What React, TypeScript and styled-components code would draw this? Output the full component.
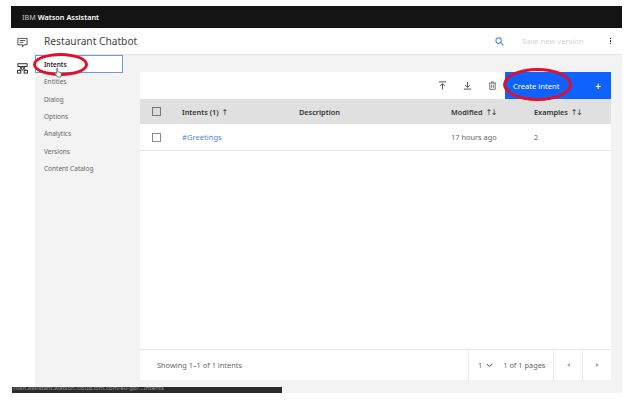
import React from 'react';
import styled, { createGlobalStyle } from 'styled-components';

const GlobalStyle = createGlobalStyle`
  html, body {
    margin: 0;
    padding: 0;
    background: #ffffff;
  }
  * {
    box-sizing: border-box;
  }
`;

const navItems = ['Intents', 'Entities', 'Dialog', 'Options', 'Analytics', 'Versions', 'Content Catalog'];

const App = () => {
  return (
    <Page>
      <GlobalStyle />
      <TopBar>
        <Brand>
          IBM <b>Watson Assistant</b>
        </Brand>
      </TopBar>
      <Body>
        <Rail>
          <svg width="11" height="11" viewBox="0 0 12 12" fill="none" stroke="#444" strokeWidth="1">
            <path d="M1 1.500h10v7H7.500L6 10.800 6 8.500H1z" />
            <path d="M3 3.800h6M3 5.800h4" />
          </svg>
          <svg width="11" height="11" viewBox="0 0 12 12" fill="none" stroke="#222" strokeWidth="1">
            <rect x="1" y="0.800" width="10" height="3" />
            <rect x="0.600" y="8" width="3.600" height="3" />
            <rect x="7.800" y="8" width="3.600" height="3" />
            <path d="M3 4l3 4 3-4M2.400 8l3.600-4 3.600 4" />
          </svg>
        </Rail>
        <Content>
          <Header>
            <Title>Restaurant Chatbot</Title>
            <HeaderActions>
              <svg width="9" height="9" viewBox="0 0 10 10" fill="none" stroke="#5a8fd0" strokeWidth="1.300">
                <circle cx="4" cy="4" r="3" />
                <path d="M6.200 6.200L9.400 9.400" />
              </svg>
              <SaveLabel>Save new version</SaveLabel>
              <Kebab>
                <i />
                <i />
                <i />
              </Kebab>
            </HeaderActions>
          </Header>
          <Workspace>
            <SideNav>
              {navItems.map((item, i) => (
                <NavItem key={item} $active={i === 0}>
                  {item}
                </NavItem>
              ))}
            </SideNav>
            <Card>
              <Toolbar>
                <ToolIcons>
                  <svg width="9" height="9" viewBox="0 0 10 10" fill="none" stroke="#444" strokeWidth="1">
                    <path d="M1 1h8M5 9.500V3M2.500 5.300L5 3l2.500 2.300" />
                  </svg>
                  <svg width="9" height="9" viewBox="0 0 10 10" fill="none" stroke="#444" strokeWidth="1">
                    <path d="M1 9h8M5 1v6M2.500 4.700L5 7l2.500-2.300" />
                  </svg>
                  <svg width="9" height="9" viewBox="0 0 10 10" fill="none" stroke="#666" strokeWidth="1">
                    <path d="M1 2.300h8M3.800 2.300V1h2.400v1.300M2 2.300v7h6v-7M4 4v3.500M6 4v3.500" />
                  </svg>
                </ToolIcons>
                <CreateButton>
                  <span>Create intent</span>
                  <Plus>+</Plus>
                </CreateButton>
              </Toolbar>
              <HeadRow>
                <CheckCell>
                  <Check $head />
                </CheckCell>
                <NameCell>Intents (1) <Arrow>↑</Arrow></NameCell>
                <DescCell>Description</DescCell>
                <ModifiedCell>Modified <Arrow>↑↓</Arrow></ModifiedCell>
                <ExamplesCell>Examples <Arrow>↑↓</Arrow></ExamplesCell>
              </HeadRow>
              <DataRow>
                <CheckCell>
                  <Check />
                </CheckCell>
                <NameCell>
                  <IntentLink>#Greetings</IntentLink>
                </NameCell>
                <DescCell />
                <ModifiedCell>17 hours ago</ModifiedCell>
                <ExamplesCell>2</ExamplesCell>
              </DataRow>
              <Spacer />
              <Footer>
                <FooterInfo>Showing 1–1 of 1 intents</FooterInfo>
                <PageSelect>
                  <span>1</span>
                  <svg width="7" height="5" viewBox="0 0 7 5" fill="none" stroke="#444" strokeWidth="1">
                    <path d="M0.800 1l2.700 2.600L6.200 1" />
                  </svg>
                  <PageText>1 of 1 pages</PageText>
                </PageSelect>
                <PagerButton>
                  <Triangle $left />
                </PagerButton>
                <PagerButton>
                  <Triangle />
                </PagerButton>
              </Footer>
            </Card>
          </Workspace>
        </Content>
      </Body>
      <StatusBar>
        <StatusText>cush.assistant.watson.cloud.ibm.com/eu-gb/...Intents</StatusText>
      </StatusBar>
      <Circle $x={33} $y={53} $w={55} $h={23} />
      <Circle $x={503} $y={68} $w={69} $h={33} />
      <Cursor viewBox="0 0 10 12" fill="#fff" stroke="#555" strokeWidth="0.800">
        <path d="M3 1.200c.7-.5 1.200 0 1.200.6v3.400l3 .8c.8.2 1.100.8.900 1.600L7.600 11H3.700L1.300 7.300c-.4-.8.5-1.300 1.200-.7l.5.5z" />
      </Cursor>
    </Page>
  );
};

export default App;

const Page = styled.div`
  position: relative;
  width: 640px;
  height: 410px;
  overflow: hidden;
  padding: 6px 18px 17px 11px;
  display: flex;
  flex-direction: column;
  background: #ffffff;
  font-family: 'Noto Sans', 'Open Sans', sans-serif;
`;
const TopBar = styled.div`
  height: 22px;
  background: #141414;
  display: flex;
  align-items: center;
  padding-left: 11px;
  flex-shrink: 0;
`;
const Brand = styled.div`
  color: #c8c8c8;
  font-size: 7.300px;
  b {
    color: #ffffff;
    font-weight: 600;
  }
`;
const Body = styled.div`
  flex: 1;
  display: flex;
  min-height: 0;
`;
const Rail = styled.div`
  width: 24px;
  display: flex;
  flex-direction: column;
  align-items: center;
  gap: 15px;
  padding: 9px 2px 0 0;
  flex-shrink: 0;
`;
const Content = styled.div`
  flex: 1;
  display: flex;
  flex-direction: column;
  min-width: 0;
`;
const Header = styled.div`
  height: 27px;
  display: flex;
  align-items: center;
  justify-content: space-between;
  padding-left: 9px;
  border-bottom: 1px solid #e4e4e4;
  flex-shrink: 0;
`;
const Title = styled.div`
  font-size: 10.200px;
  color: #444444;
`;
const HeaderActions = styled.div`
  display: flex;
  align-items: center;
  padding-right: 11px;
`;
const SaveLabel = styled.div`
  font-size: 7.600px;
  color: #d4d4d4;
  margin-left: 18px;
`;
const Kebab = styled.div`
  margin-left: 26px;
  display: flex;
  flex-direction: column;
  gap: 1px;
  i {
    display: block;
    width: 1.500px;
    height: 1.500px;
    background: #333333;
  }
`;
const Workspace = styled.div`
  flex: 1;
  display: flex;
  background: #f3f3f3;
  padding-bottom: 13px;
  min-height: 0;
`;
const SideNav = styled.div`
  width: 105px;
  display: flex;
  flex-direction: column;
  flex-shrink: 0;
`;
const NavItem = styled.div<{ $active?: boolean }>`
  width: 88px;
  height: ${(p) => (p.$active ? '18px' : '17.400px')};
  display: flex;
  align-items: center;
  padding-left: ${(p) => (p.$active ? '8px' : '9px')};
  font-size: ${(p) => (p.$active ? '6.400px' : '6.500px')};
  color: ${(p) => (p.$active ? '#222222' : '#666666')};
  font-weight: ${(p) => (p.$active ? 600 : 400)};
  background: ${(p) => (p.$active ? '#ffffff' : 'transparent')};
  border: ${(p) => (p.$active ? '1px solid #6c9bdc' : 'none')};
`;
const Card = styled.div`
  flex: 1;
  margin: 17px 11px 0 0;
  background: #ffffff;
  display: flex;
  flex-direction: column;
  min-width: 0;
`;
const Toolbar = styled.div`
  height: 27px;
  display: flex;
  justify-content: flex-end;
  align-items: stretch;
  flex-shrink: 0;
`;
const ToolIcons = styled.div`
  display: flex;
  align-items: center;
  gap: 16px;
  padding-right: 8px;
`;
const CreateButton = styled.div`
  width: 106px;
  background: #0f62fe;
  color: #ffffff;
  font-size: 7.600px;
  display: flex;
  align-items: center;
  justify-content: space-between;
  padding: 0 10px 0 8px;
`;
const Plus = styled.span`
  font-size: 10px;
  font-weight: 600;
`;
const HeadRow = styled.div`
  height: 25px;
  display: flex;
  align-items: center;
  background: #e0e0e0;
  font-size: 7.300px;
  font-weight: 600;
  color: #333333;
  flex-shrink: 0;
`;
const DataRow = styled.div`
  height: 27px;
  display: flex;
  align-items: center;
  border-bottom: 1px solid #e8e8e8;
  font-size: 7.400px;
  color: #666666;
  flex-shrink: 0;
`;
const CheckCell = styled.div`
  width: 42px;
  padding-left: 12px;
  display: flex;
  align-items: center;
`;
const Check = styled.div<{ $head?: boolean }>`
  width: 9px;
  height: 9px;
  border: 1px solid ${(p) => (p.$head ? '#777777' : '#888888')};
  background: ${(p) => (p.$head ? '#dcdcdc' : '#ffffff')};
`;
const NameCell = styled.div`
  width: 117px;
`;
const DescCell = styled.div`
  width: 152px;
`;
const ModifiedCell = styled.div`
  width: 83px;
`;
const ExamplesCell = styled.div`
  flex: 1;
`;
const Arrow = styled.span`
  font-size: 8px;
  font-family: 'DejaVu Sans', sans-serif;
  font-weight: 400;
  letter-spacing: -1.500px;
  margin-left: 1px;
`;
const IntentLink = styled.span`
  color: #4f86d8;
  font-size: 7.600px;
`;
const Spacer = styled.div`
  flex: 1;
`;
const Footer = styled.div`
  height: 31px;
  border-top: 1px solid #e8e8e8;
  display: flex;
  align-items: center;
  font-size: 7.400px;
  color: #666666;
  flex-shrink: 0;
`;
const FooterInfo = styled.div`
  flex: 1;
  padding-left: 17px;
`;
const PageSelect = styled.div`
  width: 85px;
  height: 100%;
  display: flex;
  align-items: center;
  gap: 4px;
  padding-left: 9px;
  border-left: 1px solid #e8e8e8;
`;
const PageText = styled.span`
  margin-left: 6px;
`;
const PagerButton = styled.div`
  width: 29px;
  height: 100%;
  display: flex;
  align-items: center;
  justify-content: center;
  border-left: 1px solid #e8e8e8;
`;
const Triangle = styled.div<{ $left?: boolean }>`
  width: 0;
  height: 0;
  border-top: 2.500px solid transparent;
  border-bottom: 2.500px solid transparent;
  ${(p) => (p.$left ? 'border-right: 3px solid #aaaaaa;' : 'border-left: 3px solid #aaaaaa;')}
`;
const StatusBar = styled.div`
  position: absolute;
  left: 12px;
  top: 387px;
  width: 270px;
  height: 6px;
  background: #2b2b2b;
  overflow: hidden;
`;
const StatusText = styled.div`
  font-size: 6px;
  line-height: 6px;
  color: #999999;
  padding-left: 1px;
  transform: translateY(-2.500px);
`;
const Circle = styled.div<{ $x: number; $y: number; $w: number; $h: number }>`
  position: absolute;
  left: ${(p) => p.$x}px;
  top: ${(p) => p.$y}px;
  width: ${(p) => p.$w}px;
  height: ${(p) => p.$h}px;
  border: 3px solid #e0102a;
  border-radius: 50%;
`;
const Cursor = styled.svg`
  position: absolute;
  left: 54px;
  top: 67px;
  width: 9px;
  height: 11px;
`;
